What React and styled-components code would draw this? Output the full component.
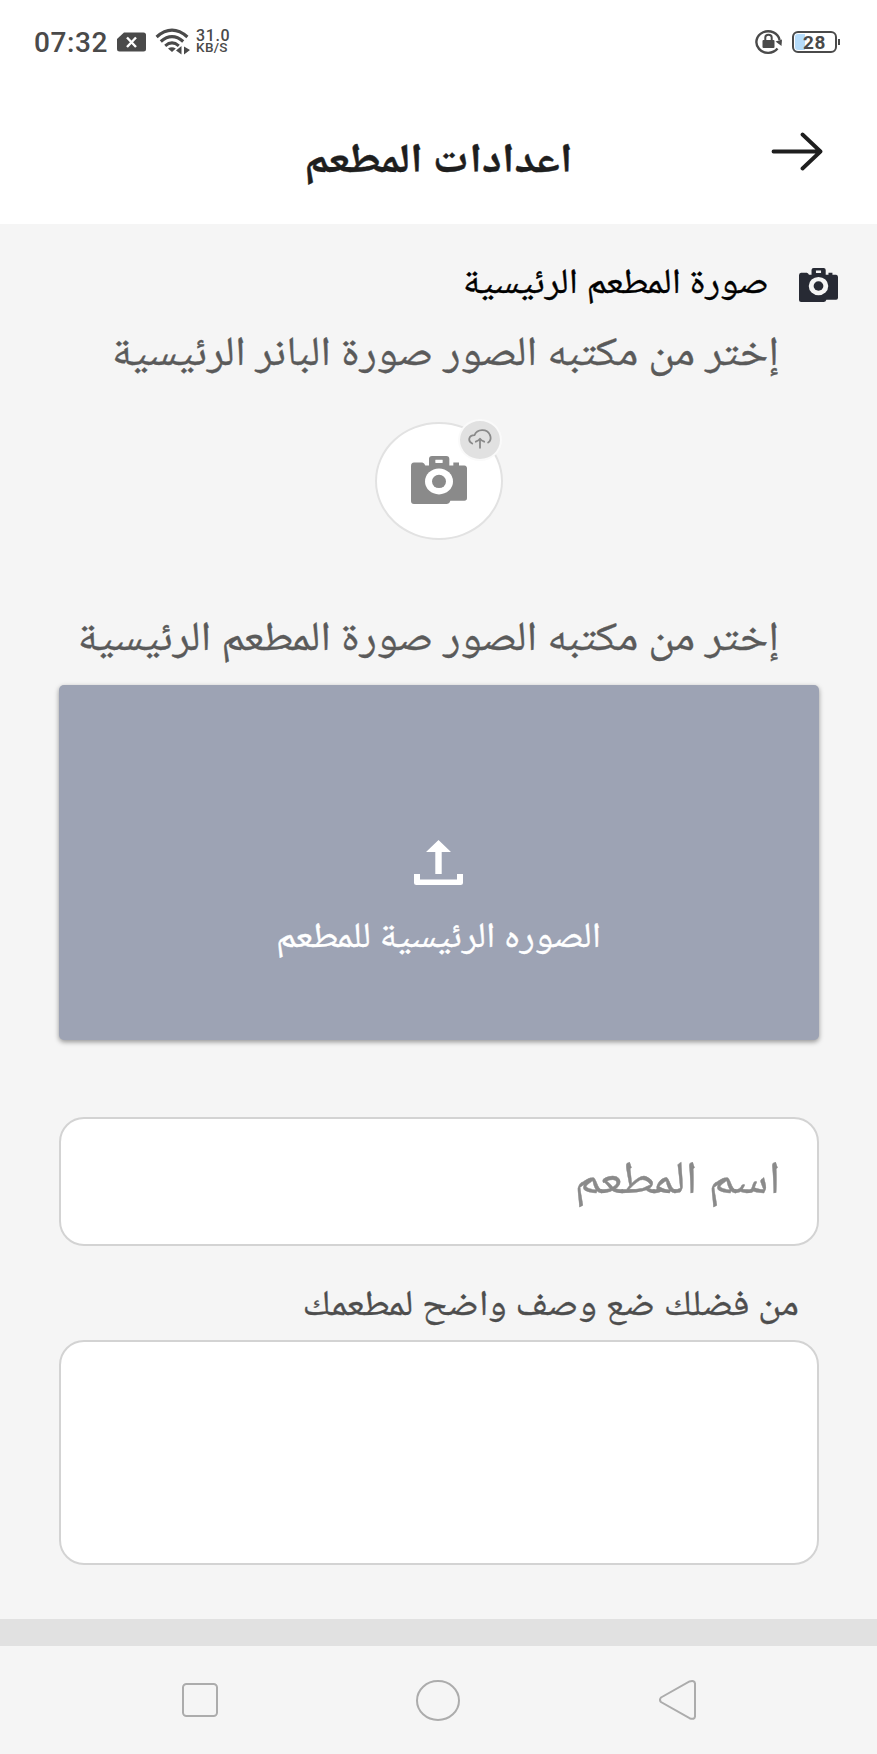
import React from 'react';
import styled, { createGlobalStyle, css } from 'styled-components';

const CameraIcon = ({ color, lens, ...props }) => (
  <svg viewBox="0 0 168 145" preserveAspectRatio="none" {...props}>
    <path
      fill={color}
      d="M0 31Q0 20 9 20H34Q40 21 43 29H54V9Q54 0 63 0H106Q115 0 115 9V29H127V20H144V29H160Q168 30 168 38V127Q168 135 160 135H118Q115 145 106 145H9Q0 145 0 136Z"
    />
    <rect x="73" y="11" width="22" height="10" rx="1" fill={lens} />
    <ellipse cx="84" cy="77" rx="42" ry="39" fill={lens} />
    <ellipse cx="84" cy="77" rx="21" ry="20" fill={color} />
  </svg>
);

const WifiIcon = () => (
  <svg width="36" height="28" viewBox="0 0 36 28" fill="none" stroke="#4a4a4a">
    <path d="M1.6 9Q17 -4.6 32.4 9" strokeWidth="3.2" />
    <path d="M5.8 13.5Q17 3.8 28.2 13.5" strokeWidth="3.2" />
    <path d="M10.2 17.8Q17 12 23.8 17.8" strokeWidth="3" />
    <path d="M13 20.5Q17 18 20.8 20.5L17 24Z" fill="#4a4a4a" stroke="none" />
    <path d="M26.5 18V26.5L21 22.5ZM29 18.5L35 22L29 26.5Z" fill="#4a4a4a" stroke="none" />
  </svg>
);

const NoSimIcon = () => (
  <svg width="29" height="20" viewBox="0 0 29 20">
    <path d="M7 0.5H26.5Q29 0.5 29 3V17Q29 19.5 26.5 19.5H2.5Q0 19.5 0 17V7Z" fill="#4a4a4a" />
    <path d="M10 5.5L19 15M19 5.5L10 15" stroke="#fff" strokeWidth="2.4" />
  </svg>
);

const RotationLockIcon = () => (
  <svg width="28" height="26" viewBox="0 0 28 26" fill="none" stroke="#4a4a4a">
    <path d="M22.5 19.5A11.7 10.8 0 1 1 24.6 11" strokeWidth="2.4" />
    <path d="M20.5 12.5L27 10.5L26.5 17Z" fill="#4a4a4a" stroke="none" />
    <rect x="7.5" y="11" width="12" height="8" rx="1" fill="#4a4a4a" stroke="none" />
    <path d="M10.3 11V8.5Q10.3 5.8 13.5 5.8T16.7 8.5V11" strokeWidth="2" />
  </svg>
);

const ArrowIcon = () => (
  <svg width="54" height="40" viewBox="0 0 54 40" fill="none" stroke="#1e1e1e" strokeWidth="3.8" strokeLinecap="round" strokeLinejoin="round">
    <path d="M3.5 20.5H50.5M32.5 3.5L50.5 20.5L32.5 37.5" />
  </svg>
);

const CloudIcon = () => (
  <svg width="24" height="20" viewBox="0 0 24 20" fill="none" stroke="#8a8a8a" strokeWidth="1.8" strokeLinecap="round" strokeLinejoin="round">
    <path d="M4.2 14.5C-0.5 12 0.5 6.3 6.5 6.2C9 -0.2 19 -0.5 21.7 5.5C23.7 9.5 22 12.5 20.2 13.5" />
    <path d="M12 18.8V10M7.8 12.7Q10.8 11.5 12 9.8Q13.2 11.5 16.2 12.7" />
  </svg>
);

const UploadIcon = () => (
  <svg width="49" height="45" viewBox="0 0 49 45" fill="#fff">
    <path d="M24.5 0L37 12H27.7V34H21.3V12H12Z" />
    <path d="M0 34H6V39.5H43V34H49V42.5Q49 45 46.5 45H2.5Q0 45 0 42.5Z" />
  </svg>
);

export default function App() {
  return (
    <Screen>
      <GlobalStyle />
      <StatusBar>
        <StatusGroup>
          <Clock>07:32</Clock>
          <NoSimIcon />
          <WifiIcon />
          <Speed>
            <b>31.0</b>
            <span>KB/S</span>
          </Speed>
        </StatusGroup>
        <StatusGroup>
          <RotationLockIcon />
          <Battery>28</Battery>
        </StatusGroup>
      </StatusBar>
      <Header>
        <Back aria-label="رجوع">
          <ArrowIcon />
        </Back>
        <Title>اعدادات المطعم</Title>
      </Header>
      <Content>
        <SectionTitle>
          <CameraIcon width="39" height="34" color="#272a34" lens="#f5f5f5" />
          <span>صورة المطعم الرئيسية</span>
        </SectionTitle>
        <Hint>إختر من مكتبه الصور صورة البانر الرئيسية</Hint>
        <Avatar>
          <CameraIcon width="56" height="48" color="#8a8a8a" lens="#fff" />
          <Badge>
            <CloudIcon />
          </Badge>
        </Avatar>
        <Hint>إختر من مكتبه الصور صورة المطعم الرئيسية</Hint>
        <UploadCard>
          <UploadIcon />
          <span>الصوره الرئيسية للمطعم</span>
        </UploadCard>
        <NameField>
          <span>اسم المطعم</span>
        </NameField>
        <Label>من فضلك ضع وصف واضح لمطعمك</Label>
        <Description />
      </Content>
      <Divider />
      <NavBar>
        <svg width="36" height="34" viewBox="0 0 36 34">
          <rect x="1" y="1" width="34" height="32" rx="3.5" />
        </svg>
        <svg width="44" height="41" viewBox="0 0 44 41">
          <ellipse cx="22" cy="20.5" rx="21" ry="19.5" />
        </svg>
        <svg width="37" height="40" viewBox="0 0 37 40">
          <path d="M2 17.5L30.5 1.5Q35.5 0 36 3.5V36.5Q35.5 40 30.5 38.2L2 22Q0 20 2 17.5Z" />
        </svg>
      </NavBar>
    </Screen>
  );
}

const GlobalStyle = createGlobalStyle`
  * {
    box-sizing: border-box;
  }
  body {
    margin: 0;
    background: #f5f5f5;
  }
  svg {
    display: block;
    flex: none;
  }
`;

// wide, slightly flattened lettering, squeezed towards the baseline
const flatText = css`
  transform: scaleY(0.91);
  transform-origin: 50% calc(50% + 0.2175em);
  white-space: nowrap;
  -webkit-text-stroke: 0.4px currentColor;
`;

const Screen = styled.div`
  display: flex;
  flex-direction: column;
  width: 877px;
  height: 1754px;
  overflow: hidden;
  background: #f5f5f5;
  font-family: 'Noto Naskh Arabic', 'DejaVu Sans', sans-serif;
`;

const StatusBar = styled.div`
  display: flex;
  justify-content: space-between;
  align-items: center;
  height: 84px;
  padding: 0 40px 0 34px;
  background: #fff;
  color: #4a4a4a;
  font-family: Roboto, sans-serif;
`;

const StatusGroup = styled.div`
  display: flex;
  align-items: center;
  gap: 9px;
`;

const Clock = styled.span`
  padding-top: 2px;
  font-size: 28px;
  font-weight: 500;
  line-height: 32px;
  letter-spacing: 0.6px;
`;

const Speed = styled.div`
  display: flex;
  flex-direction: column;
  margin: -1px 0 0 -4px;
  font-weight: 500;
  b {
    font-size: 16px;
    line-height: 12px;
    font-weight: 500;
    letter-spacing: 0.6px;
  }
  span {
    font-size: 13.5px;
    line-height: 11px;
    letter-spacing: 0.3px;
  }
`;

const Battery = styled.div`
  position: relative;
  width: 45px;
  height: 22px;
  margin-top: -1px;
  border: 2px solid #4a4a4a;
  border-radius: 6px;
  background: linear-gradient(90deg, #b5dcfb 28%, #fff 28%);
  box-shadow: inset 0 0 0 1px #fff;
  font-size: 19px;
  font-weight: 700;
  line-height: 19px;
  letter-spacing: 0.5px;
  text-align: center;
  &::after {
    content: '';
    position: absolute;
    top: 6px;
    right: -5px;
    width: 2px;
    height: 6px;
    background: #4a4a4a;
  }
`;

const Header = styled.header`
  direction: rtl;
  display: grid;
  grid-template-columns: 1fr auto 1fr;
  height: 140px;
  padding: 0 53px;
  background: #fff;
`;

const Back = styled.button`
  justify-self: start;
  align-self: start;
  margin-top: 47px;
  padding: 0;
  border: 0;
  background: none;
`;

const Title = styled.h1`
  ${flatText}
  margin: 46px 0 0;
  font-size: 45.2px;
  font-weight: 700;
  line-height: 64px;
  color: #1e1e1e;
`;

const Content = styled.main`
  direction: rtl;
  display: flex;
  flex-direction: column;
  height: 1395px;
  padding: 30px 58.5px 0;
`;

const SectionTitle = styled.div`
  display: flex;
  align-items: center;
  gap: 30px;
  height: 62px;
  margin-right: -19.5px;
  font-size: 38.8px;
  line-height: 62px;
  color: #000;
  span {
    ${flatText}
  }
`;

const Hint = styled.p`
  ${flatText}
  margin: 10px 39.5px 0;
  font-size: 45.1px;
  line-height: 60px;
  color: #5a5a5a;
`;

const Avatar = styled.div`
  position: relative;
  display: flex;
  align-items: center;
  justify-content: center;
  align-self: center;
  width: 128px;
  height: 118px;
  margin: 36px 0 61px;
  padding-bottom: 3px;
  border: 2px solid #e2e2e2;
  border-radius: 50%;
  background: #fff;
`;

const Badge = styled.div`
  position: absolute;
  top: -5px;
  right: -1px;
  display: flex;
  align-items: center;
  justify-content: center;
  width: 44px;
  height: 42px;
  padding-bottom: 2px;
  border: 2px solid #fafafa;
  border-radius: 50%;
  background: #e1e1e1;
`;

const UploadCard = styled.div`
  display: flex;
  flex-direction: column;
  align-items: center;
  height: 355px;
  margin-top: 14px;
  padding-top: 155px;
  border-radius: 5px;
  background: #9da3b4;
  box-shadow: 0 2px 5px rgba(0, 0, 0, 0.4);
  color: #fff;
  font-size: 39px;
  span {
    ${flatText}
    margin-top: 24px;
    line-height: 60px;
  }
`;

const NameField = styled.div`
  display: flex;
  height: 129px;
  margin-top: 77px;
  padding: 0 36px;
  border: 2px solid #d3d3d3;
  border-radius: 25px;
  background: #fff;
  color: #8a8a8a;
  font-size: 50.5px;
  line-height: 127px;
  span {
    ${flatText}
  }
`;

const Label = styled.label`
  ${flatText}
  margin: 31px 19.5px 0 0;
  font-size: 39.3px;
  line-height: 60px;
  color: #4d4d4d;
`;

const Description = styled.div`
  height: 225px;
  margin-top: 3px;
  border: 2px solid #d3d3d3;
  border-radius: 25px;
  background: #fff;
`;

const Divider = styled.div`
  height: 27px;
  background: #e1e1e1;
`;

const NavBar = styled.nav`
  display: flex;
  align-items: center;
  justify-content: center;
  gap: 198.5px;
  height: 108px;
  svg {
    fill: none;
    stroke: #acacac;
    stroke-width: 2;
  }
`;
